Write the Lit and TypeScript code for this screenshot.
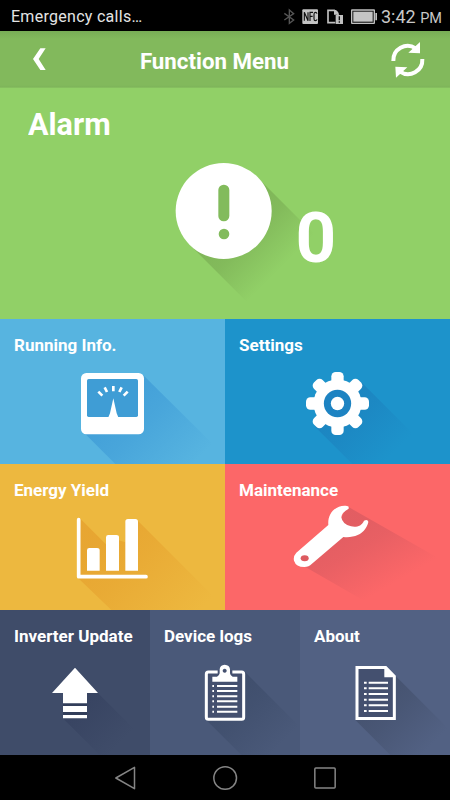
import { LitElement, html, svg, css } from "lit";
import { customElement } from "lit/decorators.js";

const shade = (id: string, color: string, x1: number, y1: number, x2: number, y2: number, o = 0.7) => svg`
  <linearGradient id=${id} gradientUnits="userSpaceOnUse" x1=${x1} y1=${y1} x2=${x2} y2=${y2}>
    <stop offset="0" stop-color=${color} stop-opacity="0.95"/>
    <stop offset="0.35" stop-color=${color} stop-opacity=${o}/>
    <stop offset="1" stop-color=${color} stop-opacity="0"/>
  </linearGradient>`;

const teeth = [0, 45, 90, 135, 180, 225, 270, 315];

@customElement("app-root")
export class AppRoot extends LitElement {
  static styles = css`
    :host { display: flex; flex-direction: column; width: 450px; height: 800px; overflow: hidden; background: #000; color: #fff; font-family: Roboto, "Liberation Sans", sans-serif; }
    .status { height: 31px; display: flex; align-items: center; box-sizing: border-box; padding: 2px 7px 0 11px; font-size: 16px; color: #e4e4e4; }
    .carrier { flex: 1; letter-spacing: 0.28px; }
    .sicons { width: 96px; height: 20px; flex: none; }
    .clock { font-size: 18px; color: #c8c8c8; width: 62px; margin-left: 4px; white-space: nowrap; letter-spacing: 0; }
    .clock small { font-size: 14.5px; }
    .header { height: 57px; box-sizing: border-box; display: grid; grid-template-columns: 80px 1fr 80px; align-items: center; background: linear-gradient(#78ad56, #82b95c 8px, #82b95c 54px, #7eb45a 56px, #8cc864 57px); }
    .header svg { width: 80px; height: 57px; display: block; }
    .heading { text-align: center; font-size: 22.3px; font-weight: 700; transform: translate(-10.5px, 0.5px); white-space: nowrap; }
    .tile { display: grid; overflow: hidden; position: relative; }
    .tile > * { grid-area: 1 / 1; }
    .tile > svg { width: 100%; height: 100%; display: block; }
    .label { font-size: 17px; font-weight: 700; line-height: 20px; padding: 16px 0 0 14px; z-index: 1; white-space: nowrap; }
    .alarm { height: 231px; background: #91d067; }
    .alarm .label { font-size: 32px; line-height: 38px; padding: 17px 0 0 28px; transform: scaleX(0.955); transform-origin: 28px 0; }
    .count { align-self: start; font-size: 71px; line-height: 80px; font-weight: 700; padding: 110px 0 0 295.5px; z-index: 1; }
    .row { display: grid; grid-template-columns: 1fr 1fr; height: 145px; }
    .row.warm { height: 146px; }
    .row.three { grid-template-columns: 1fr 1fr 1fr; }
    .running { background: #57b4e0; } .settings { background: #1d93cb; }
    .energy { background: #edb83f; } .maint { background: #fc6768; }
    .update { background: #3f4c69; } .logs { background: #4a5979; } .about { background: #526183; }
    .nav { height: 45px; display: flex; justify-content: center; background: #000; }
    .nav svg { width: 225px; height: 45px; }
    .w { fill: #fff; }
  `;

  render() {
    return html`
      <div class="status">
        <span class="carrier">Emergency calls…</span>
        <svg class="sicons" viewBox="165 18 288 60">
          <path d="M175 37L203 57L190 67V27L203 38L175 57" fill="none" stroke="#555" stroke-width="4"/>
          <rect x="229" y="25" width="47" height="44" rx="3" fill="#c4c4c4"/>
          <path d="M235 59V34L246 59V34M252 60V34H261M252 46H260M273 38Q272 34 268 34Q264 34 264 40V53Q264 59 268 59Q272 59 273 55" fill="none" stroke="#111" stroke-width="3.4"/>
          <path d="M328 65H306V28H325L336 39V45" fill="none" stroke="#c0c0c0" stroke-width="5"/>
          <path d="M324 28V41H337V34L330 27Z" fill="#c0c0c0"/>
          <rect x="329" y="42" width="22" height="27" fill="#c0c0c0"/>
          <path d="M340 46V58M340 61V65" stroke="#111" stroke-width="4"/>
          <rect x="377" y="27" width="68" height="40" rx="1" fill="#111" stroke="#c0c0c0" stroke-width="4"/>
          <rect x="382" y="32" width="58" height="30" fill="#c4c4c4"/>
          <path d="M448 36h5v22h-5z" fill="#c0c0c0"/>
        </svg>
        <span class="clock">3:42 <small>PM</small></span>
      </div>
      <div class="header">
        <svg viewBox="0 93 240 171"><path class="w" d="M121 145H137L116 177L137 210H121L99 177Z"/></svg>
        <div class="heading">Function Menu</div>
        <svg viewBox="435 93 240 171">
          <path d="M505 183A43 43 0 0 1 572 145M592 177A43 43 0 0 1 525 215" fill="none" stroke="#fff" stroke-width="12"/>
          <path class="w" d="M585 126V160L550 158ZM511 200L547 202L513 233Z"/>
        </svg>
      </div>
      <div class="tile alarm">
        <svg viewBox="-450 9 1350 693">
          <defs>${shade("ga", "#7fb558", 250, 407, 392, 549, 0.8)}</defs>
          <path fill="url(#ga)" d="M120 480L330 690H735L325 280Z"/>
          <circle class="w" cx="221" cy="378" r="144"/>
          <rect x="205" y="299" width="33" height="110" rx="16" fill="#82bb5c"/>
          <circle cx="222" cy="447" r="16" fill="#82bb5c"/>
        </svg>
        <div class="label">Alarm</div>
        <div class="count">0</div>
      </div>
      <div class="row">
        <div class="tile running">
          <svg viewBox="0 3 675 435">
            <defs>${shade("gr", "#429fd8", 337, 256, 550, 469)}</defs>
            <path fill="url(#gr)" d="M250 342L346 438H675V415L430 172Z"/>
            <rect class="w" x="243" y="165" width="189" height="184" rx="16"/>
            <rect x="261" y="183" width="153" height="114" rx="5" fill="#3f9dd5"/>
            <path d="M295 221L307 233M314 208L321 222M340 204V220M365 208L358 222M383 221L371 233" stroke="#fff" stroke-width="8"/>
            <path class="w" d="M340 241L350 286L355 298H325L330 286Z"/>
          </svg>
          <div class="label">Running Info.</div>
        </div>
        <div class="tile settings">
          <svg viewBox="0 3 675 435">
            <defs>${shade("gs", "#1c84c0", 337, 256, 495, 414)}</defs>
            <path fill="url(#gs)" d="M270 326L382 438H655L405 188Z"/>
            ${teeth.map((a) => svg`<rect class="w" x="319" y="162" width="37" height="60" rx="13" transform="rotate(${a} 337.5 256.5)"/>`)}
            <circle class="w" cx="337.500" cy="256.500" r="72"/>
            <circle cx="337.500" cy="256.500" r="41" fill="#1d83c2"/>
            <circle class="w" cx="337.500" cy="256.500" r="20"/>
          </svg>
          <div class="label">Settings</div>
        </div>
      </div>
      <div class="row warm">
        <div class="tile energy">
          <svg viewBox="0 3 675 438">
            <defs>${shade("ge", "#e7a531", 300, 220, 560, 480)}</defs>
            <path fill="url(#ge)" d="M242 168L318 244V220L376 238V180L412 172L675 435V441H334L234 345Z"/>
            <path d="M236 170V341H438" fill="none" stroke="#fff" stroke-width="11" stroke-linecap="round" stroke-linejoin="round"/>
            <path class="w" d="M261 323V262q0-7 7-7H291q8 0 8 7V323ZM318 323V223q0-7 7-7H349q8 0 8 7V323ZM376 323V176q0-8 8-8H406q8 0 8 8V323Z"/>
          </svg>
          <div class="label">Energy Yield</div>
        </div>
        <div class="tile maint">
          <svg viewBox="0 3 675 438">
            <defs>${shade("gm", "#e15d62", 310, 220, 420, 411, 0.75)}</defs>
            <path fill="url(#gm)" d="M240 311L460 438L675 305L367 130L330 200Z"/>
            <path class="w" d="M371 131C366 127 352 127 342 131C318 141 308 162 310 186L214 269Q204 280 207 293Q213 312 238 312Q252 312 260 303L355 222C384 225 408 216 420 199Q430 183 430 176Q428 168 417 173C410 190 394 193 378 190Q352 184 349 163Q350 148 371 137Z"/>
            <ellipse cx="239" cy="286" rx="12" ry="9" fill="#dd5b60"/>
          </svg>
          <div class="label">Maintenance</div>
        </div>
      </div>
      <div class="row three">
        <div class="tile update">
          <svg viewBox="0 6 450 435">
            <defs>${shade("gu", "#364260", 225, 250, 370, 395, 0.65)}</defs>
            <path fill="url(#gu)" d="M160 255L190 255V332L299 441H450V411L293 254L225 200Z"/>
            <path fill="#323e5a" d="M189 280h72v50h-72z"/>
            <path class="w" d="M225 179L294 255H261V286H189V255H156ZM189 294h72v18h-72zM189 321h72v10h-72z"/>
          </svg>
          <div class="label">Inverter Update</div>
        </div>
        <div class="tile logs">
          <svg viewBox="450 6 450 435">
            <defs>${shade("gl", "#3f4e6c", 675, 260, 835, 420)}</defs>
            <path fill="url(#gl)" d="M618 335L724 441H900V357L733 190Z"/>
            <rect x="619" y="192" width="112" height="142" rx="6" fill="#44506f" stroke="#fff" stroke-width="9"/>
            <path fill="#44506f" d="M653 186h44v18h-44z"/>
            <path class="w" fill-rule="evenodd" d="M637 221V206H651Q658 204 659 196V184Q660 171 674 170Q689 171 690 184V196Q691 204 698 206H712V221ZM674 182a6 6 0 1 0 .1 0Z"/>
            ${[234, 249, 265, 280, 296, 311].map((y) => svg`<path d="M637 ${y}h5M651 ${y}h61" stroke="#fff" stroke-width="6"/>`)}
          </svg>
          <div class="label">Device logs</div>
        </div>
        <div class="tile about">
          <svg viewBox="225 6 450 435">
            <defs>${shade("gb", "#45526f", 450, 260, 610, 420)}</defs>
            <path fill="url(#gb)" d="M391 336L496 441H675V367L512 204Z"/>
            <path d="M396 178.500H482L508 205V331.500H396Z" fill="#44506f" stroke="#fff" stroke-width="9"/>
            <path class="w" d="M478 177h6l26 27v4h-32z"/>
            ${[224, 241, 258, 275, 292, 309].map((y) => svg`<path d="M417 ${y}h8M431 ${y}h58" stroke="#fff" stroke-width="6"/>`)}
          </svg>
          <div class="label">About</div>
        </div>
      </div>
      <div class="nav">
        <svg viewBox="338.500 441 675 135">
          <g fill="none" stroke="#858585" stroke-width="4.500" stroke-linejoin="round">
            <path d="M347 510L403 478V542Z"/>
            <circle cx="675" cy="510" r="34"/>
            <rect x="944" y="480" width="61" height="60" rx="3"/>
          </g>
        </svg>
      </div>
    `;
  }
}
